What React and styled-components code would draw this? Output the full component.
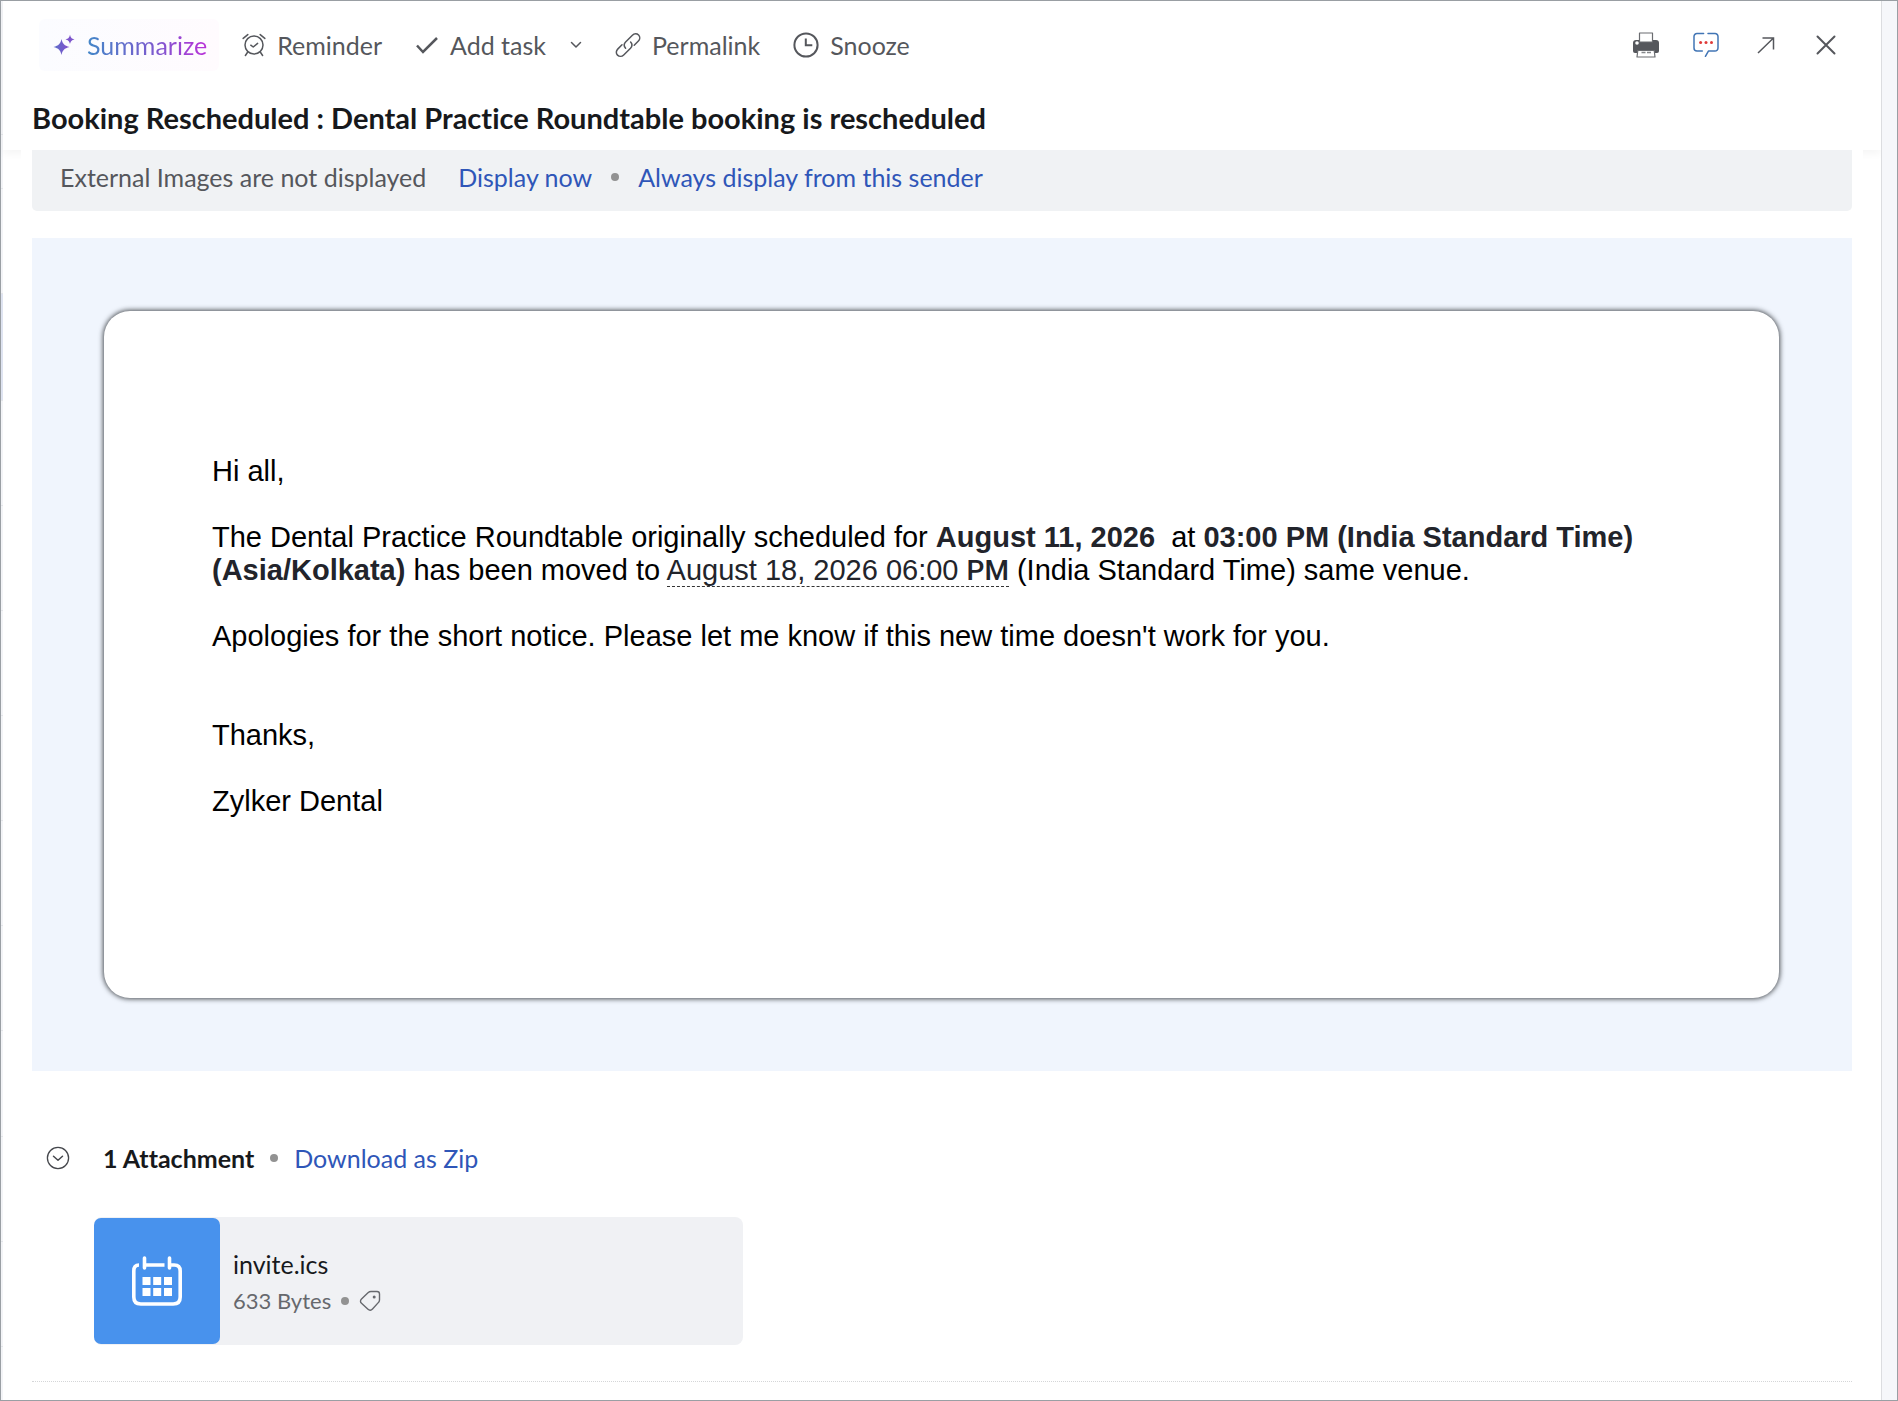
import React from "react";
import styled, { createGlobalStyle } from "styled-components";

const GlobalStyle = createGlobalStyle`
  *, *::before, *::after { box-sizing: border-box; }
  body {
    margin: 0;
    background: #fff;
    color: #17191c;
    font: 25px/32px Lato, "Open Sans", sans-serif;
    font-variant-ligatures: none;
  }
  button { font: inherit; color: inherit; background: none; border: 0; margin: 0; padding: 0; cursor: pointer; }
  h1, h2, p { margin: 0; }
  svg { display: block; flex: none; }
`;

const Frame = styled.div`
  display: flex;
  min-height: 100vh;
  border: 1px solid #9a9fa4;
`;

const ListEdge = styled.div`
  display: flex;
  flex-direction: column;
  width: 2px;
  background: #f3f4f7;
`;

const EdgeRow = styled.div`
  height: ${(p) => p.$height}px;
  background: ${(p) => (p.$selected ? "#dfe4f1" : "transparent")};
  border-bottom: 1px solid #e4e6ea;
`;

const Pane = styled.main`
  flex: 1;
  min-width: 0;
  display: flex;
  flex-direction: column;
`;

const Rail = styled.aside`
  width: 16px;
  border-left: 1px solid #dcdde0;
  background: #f6f7fa;
`;

const Header = styled.header`
  padding: 18px 29px 15px;
  box-shadow: 0 4px 8px rgba(0, 0, 0, 0.04);
`;

const Toolbar = styled.div`
  display: flex;
  justify-content: space-between;
  align-items: center;
  height: 52px;
  padding: 0 13px 0 7px;
  color: #55575c;
`;

const Group = styled.div`
  display: flex;
  align-items: center;
  gap: ${(p) => p.$gap}px;
`;

const ToolButton = styled.button`
  display: flex;
  align-items: center;
  justify-content: center;
  gap: 11px;
  min-width: ${(p) => p.$minWidth || 0}px;
  white-space: nowrap;
`;

const SummarizeButton = styled(ToolButton)`
  height: 52px;
  gap: 12px;
  padding: 0 12px 0 14px;
  border-radius: 6px;
  background: linear-gradient(90deg, #fbfcff, #fffbfe);
`;

const GradientText = styled.span`
  background: linear-gradient(90deg, #4387c8, #7a5bce 55%, #b932d8);
  background-clip: text;
  color: transparent;
`;

const Title = styled.h1`
  margin-top: 29px;
  font-size: 29px;
  line-height: 35px;
  font-weight: 700;
`;

const Body = styled.div`
  position: relative;
  margin: 0 18px;
  padding: 0 11px;
  background: #fff;
`;

const Banner = styled.div`
  display: flex;
  align-items: center;
  height: 61px;
  padding: 0 28px 8px;
  border-radius: 0 0 5px 5px;
  background: #f0f2f4;
  color: #55575c;
`;

const Link = styled.a`
  color: #2f56b8;
  text-decoration: none;
`;

const BannerLinks = styled.div`
  display: flex;
  align-items: center;
  gap: 19px;
  margin-left: 32px;
`;

const Dot = styled.span`
  width: 8px;
  height: 8px;
  border-radius: 50%;
  background: #929292;
`;

const Message = styled.section`
  margin-top: 27px;
  padding: 73px 73px 73px 72px;
  background: #f0f5fd;
`;

const Card = styled.article`
  display: grid;
  row-gap: 33px;
  padding: 144px 108px 180px;
  border-radius: 26px;
  background: #fff;
  box-shadow: 0 0 5px 1px rgba(20, 24, 28, 0.75);
  color: #000;
  font: 29px/33px "Liberation Sans", Arial, sans-serif;
`;

const Closing = styled.p`
  padding-top: 33px;
`;

const Strong = styled.strong`
  color: #22242b;
`;

const DateLink = styled.span`
  color: #22242b;
  border-bottom: 1px dashed #333;
`;

const Meridiem = styled.span`
  font-family: Roboto, sans-serif;
  font-size: 28px;
  font-weight: 500;
`;

const AttachmentHead = styled.div`
  display: flex;
  align-items: center;
  gap: 16px;
  margin-top: 71px;
  padding-left: 14px;
`;

const AttachmentTitle = styled.h2`
  margin-left: 17px;
  font-size: 25px;
  line-height: 32px;
`;

const FileCard = styled.div`
  display: flex;
  align-items: center;
  gap: 13px;
  width: 649px;
  max-width: 100%;
  height: 128px;
  margin: 43px 0 0 62px;
  border-radius: 8px;
  background: #f0f1f4;
`;

const FileTile = styled.div`
  display: grid;
  place-items: center;
  width: 126px;
  height: 126px;
  border-radius: 7px;
  background: #4892ed;
`;

const FileInfo = styled.div`
  padding-top: 4px;
`;

const FileName = styled.div`
  line-height: 36px;
`;

const FileMeta = styled.div`
  display: flex;
  align-items: center;
  gap: 10px;
  font-size: 22px;
  line-height: 38px;
  color: #66686d;
`;

const Divider = styled.hr`
  margin: 36px 0 18px;
  border: 0;
  border-top: 1px dotted #d5d6d8;
`;

const Icon = ({ size = 26, children, ...rest }) => (
  <svg width={size} height={size} viewBox={`0 0 ${size} ${size}`} fill="none" stroke="currentColor"
    strokeWidth="1.5" strokeLinecap="round" strokeLinejoin="round" aria-hidden="true" {...rest}>
    {children}
  </svg>
);

const Sparkles = () => (
  <Icon size={22} stroke="none">
    <defs>
      <linearGradient id="spark" x1="0" x2="1">
        <stop offset="0" stopColor="#5b6fca" />
        <stop offset="1" stopColor="#8450cc" />
      </linearGradient>
    </defs>
    <path fill="url(#spark)" d="M8.500 5C9.700 10 11.200 11.600 16.500 13 11.200 14.400 9.700 16 8.500 21 7.300 16 5.800 14.400 .5 13 5.800 11.600 7.300 10 8.500 5Z" />
    <path fill="#7d55cc" d="M17 .8C17.800 3.800 18.600 4.700 21.500 5.400 18.600 6.100 17.800 7 17 10 16.200 7 15.400 6.100 12.500 5.400 15.400 4.700 16.200 3.800 17 .8Z" />
  </Icon>
);

const AlarmIcon = () => (
  <Icon size={24}>
    <circle cx="12" cy="12" r="9" />
    <path d="M8.800 12.200l2.400 1.800 4.400-3.600M1.200 5.400l4.600-3.800M22.800 5.400l-4.600-3.800M5.400 19.500l-2 3M18.600 19.500l2 3" />
  </Icon>
);

const CheckIcon = () => (
  <Icon size={24} strokeWidth="2.500" strokeLinecap="butt" strokeLinejoin="miter">
    <path d="M2 12.500l6 6.500L22 5" />
  </Icon>
);

const ChevronIcon = () => (
  <Icon size={12}>
    <path d="M1.500 3.500l4.500 4.500 4.500-4.500" />
  </Icon>
);

const ChainIcon = () => (
  <Icon size={26}>
    <path d="M10.600 16.200C8.600 14 9 11.700 10.600 10L17.400 3.200C19.200 1.400 21.900 1.400 23.600 3 25.200 4.700 25.100 7.300 23.400 9L19.200 13.200" />
    <path d="M15.600 10C17.600 12.200 17.100 14.500 15.500 16.200L8.700 23C6.900 24.800 4.100 24.700 2.500 23.100 .8 21.400 1 18.800 2.700 17.100L7 12.800" />
  </Icon>
);

const ClockIcon = () => (
  <Icon size={26} strokeWidth="2">
    <circle cx="13" cy="13" r="11.600" />
    <path strokeLinecap="butt" strokeLinejoin="miter" d="M12.800 6.500v6.700h6.500" />
  </Icon>
);

const PrinterIcon = () => (
  <Icon size={26} stroke="none">
    <path fill="#55575c" d="M3 8h20a3 3 0 0 1 3 3v8a2 2 0 0 1-2 2H2a2 2 0 0 1-2-2v-8a3 3 0 0 1 3-3Z" />
    <path fill="#fff" stroke="#6a6c70" d="M6.500 1h13v9h-13zM4.800 18.500h16.400l.8 6.500H4z" strokeWidth="1.200" />
    <circle cx="4" cy="11" r="1.800" fill="#fff" />
    <path stroke="#85878a" strokeLinecap="butt" d="M8.500 20.500h4M14 20.500h4" />
  </Icon>
);

const ChatIcon = () => (
  <Icon size={26} stroke="#4175b5" strokeWidth="1.500">
    <path d="M10.600 1.500H4a3 3 0 0 0-3 3v11.600a3 3 0 0 0 3 3h5.300M15 1.500h7a3 3 0 0 1 3 3v11.600a3 3 0 0 1-3 3h-6.600l-3 5.200" />
    <g fill="#e03a38" stroke="none">
      <circle cx="7.600" cy="10.400" r="1.500" />
      <circle cx="13" cy="10.400" r="1.500" />
      <circle cx="18.500" cy="10.400" r="1.500" />
    </g>
  </Icon>
);

const ArrowIcon = () => (
  <Icon size={18}>
    <path strokeLinecap="butt" strokeLinejoin="miter" d="M1 17L16.500 2M5.500 2h11v11.500" />
  </Icon>
);

const CloseIcon = () => (
  <Icon size={20} strokeWidth="2">
    <path d="M1.500 1.500l17 17M18.500 1.500l-17 17" />
  </Icon>
);

const CircleChevron = () => (
  <Icon size={24} color="#45474c">
    <circle cx="12" cy="12" r="10.600" strokeWidth="1.300" />
    <path d="M7.500 10.200l4.500 4 4.500-4" />
  </Icon>
);

const CalendarIcon = () => (
  <Icon size={50} stroke="#fff" strokeWidth="3.600" strokeLinecap="butt">
    <path d="M7 9Q1.800 9 1.800 15v26q0 7 7 7h32.400q7 0 7-7V15q0-6-6-6H38M12.500 9h20" />
    <path strokeLinecap="round" d="M12.500 2v10M37.500 2v10" />
    <path fill="#fff" stroke="none" d="M10.500 21h8v8h-8zM21.200 21h8v8h-8zM32 21h8v8h-8zM10.500 32h8v8h-8zM21.200 32h8v8h-8zM32 32h8v8h-8z" />
  </Icon>
);

const TagIcon = () => (
  <Icon size={22} strokeWidth="1.400">
    <path d="M12 1.500h6a2.500 2.500 0 0 1 2.500 2.500v6c0 1-.3 1.700-1 2.400l-6 6.600c-1.400 1.500-3 1.700-4.500.3l-6.500-6c-1.400-1.300-1.300-3 0-4.300L9 2.800C10 1.900 11 1.500 12 1.500Z" />
    <circle cx="15.200" cy="7" r="1.500" fill="currentColor" stroke="none" />
  </Icon>
);

const listRows = [
  { height: 134 }, { height: 54 }, { height: 105 }, { height: 107, selected: true },
  { height: 105 }, { height: 105 }, { height: 105 }, { height: 105 },
  { height: 105 }, { height: 105 }, { height: 106 }, { height: 105 }, { height: 105 },
];

export default function App() {
  return (
    <>
      <GlobalStyle />
      <Frame>
        <ListEdge>
          {listRows.map((row, i) => (
            <EdgeRow key={i} $height={row.height} $selected={row.selected} />
          ))}
        </ListEdge>
        <Pane>
          <Header>
            <Toolbar>
              <Group $gap={23}>
                <SummarizeButton>
                  <Sparkles />
                  <GradientText>Summarize</GradientText>
                </SummarizeButton>
                <Group $gap={33}>
                  <ToolButton><AlarmIcon />Reminder</ToolButton>
                  <Group $gap={24}>
                    <ToolButton><CheckIcon />Add task</ToolButton>
                    <ToolButton aria-label="More task options"><ChevronIcon /></ToolButton>
                  </Group>
                  <ToolButton><ChainIcon />Permalink</ToolButton>
                  <ToolButton><ClockIcon />Snooze</ToolButton>
                </Group>
              </Group>
              <Group $gap={34}>
                <ToolButton $minWidth={26} aria-label="Print"><PrinterIcon /></ToolButton>
                <ToolButton $minWidth={26} aria-label="Comments"><ChatIcon /></ToolButton>
                <ToolButton $minWidth={26} aria-label="Open in new window"><ArrowIcon /></ToolButton>
                <ToolButton $minWidth={26} aria-label="Close"><CloseIcon /></ToolButton>
              </Group>
            </Toolbar>
            <Title>Booking Rescheduled : Dental Practice Roundtable booking is rescheduled</Title>
          </Header>
          <Body>
            <Banner>
              <span>External Images are not displayed</span>
              <BannerLinks>
                <Link href="#display">Display now</Link>
                <Dot />
                <Link href="#always">Always display from this sender</Link>
              </BannerLinks>
            </Banner>
            <Message>
              <Card>
                <p>Hi all,</p>
                <p>
                  The Dental Practice Roundtable originally scheduled for{" "}
                  <Strong>August 11, 2026</Strong>&nbsp; at{" "}
                  <Strong>03:00 PM (India Standard Time) (Asia/Kolkata)</Strong> has been moved to{" "}
                  <DateLink>August 18, 2026 06:00 <Meridiem>PM</Meridiem></DateLink> (India Standard Time) same venue.
                </p>
                <p>
                  Apologies for the short notice. Please let me know if this new time doesn't work for you.
                </p>
                <Closing>Thanks,</Closing>
                <p>Zylker Dental</p>
              </Card>
            </Message>
            <AttachmentHead>
              <ToolButton aria-label="Collapse attachments"><CircleChevron /></ToolButton>
              <AttachmentTitle>1 Attachment</AttachmentTitle>
              <Dot />
              <Link href="#zip">Download as Zip</Link>
            </AttachmentHead>
            <FileCard>
              <FileTile><CalendarIcon /></FileTile>
              <FileInfo>
                <FileName>invite.ics</FileName>
                <FileMeta>
                  633 Bytes
                  <Dot />
                  <ToolButton aria-label="Add tag"><TagIcon /></ToolButton>
                </FileMeta>
              </FileInfo>
            </FileCard>
            <Divider />
          </Body>
        </Pane>
        <Rail />
      </Frame>
    </>
  );
}
